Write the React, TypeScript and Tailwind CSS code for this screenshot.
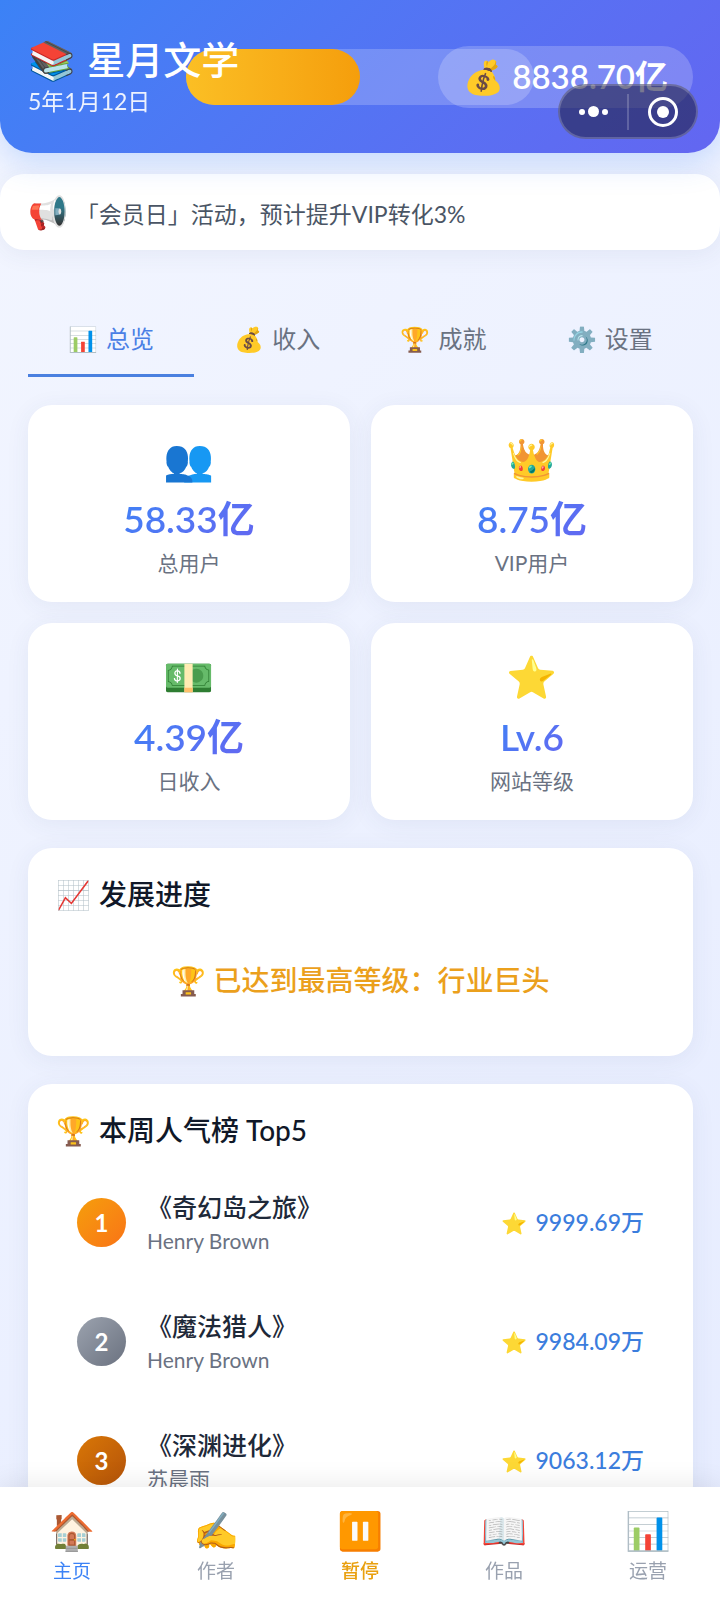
import { useState } from 'react';
import clsx from 'clsx';

interface Stat {
  icon: string;
  value: string;
  label: string;
}

interface Book {
  title: string;
  author: string;
  score: string;
  badge: string;
}

const tabs = [
  { id: 'overview', icon: '📊', label: '总览' },
  { id: 'income', icon: '💰', label: '收入' },
  { id: 'achievements', icon: '🏆', label: '成就' },
  { id: 'settings', icon: '⚙️', label: '设置' },
];

const stats: Stat[] = [
  { icon: '👥', value: '58.33亿', label: '总用户' },
  { icon: '👑', value: '8.75亿', label: 'VIP用户' },
  { icon: '💵', value: '4.39亿', label: '日收入' },
  { icon: '⭐', value: 'Lv.6', label: '网站等级' },
];

const books: Book[] = [
  { title: '《奇幻岛之旅》', author: 'Henry Brown', score: '9999.69万', badge: 'from-[#f59e0b] to-[#f97316]' },
  { title: '《魔法猎人》', author: 'Henry Brown', score: '9984.09万', badge: 'from-[#9ca3af] to-[#6b7280]' },
  { title: '《深渊进化》', author: '苏晨雨', score: '9063.12万', badge: 'from-[#d97706] to-[#b45309]' },
];

const navItems = [
  { id: 'home', icon: '🏠', label: '主页', color: 'text-[#3b82f6]' },
  { id: 'authors', icon: '✍️', label: '作者', color: 'text-gray-400' },
  { id: 'pause', icon: '⏸️', label: '暂停', color: 'text-[#e9a010] font-medium' },
  { id: 'works', icon: '📖', label: '作品', color: 'text-gray-400' },
  { id: 'operate', icon: '📊', label: '运营', color: 'text-gray-400' },
];

const cardClass = 'rounded-3xl bg-white shadow-[0_4px_24px_rgba(60,70,120,0.07)]';

function Capsule() {
  return (
    <div className="absolute right-[22px] bottom-3.5 z-20 flex h-[55px] w-[140px] items-center rounded-full border-2 border-white/20 bg-[#1f2048]/60">
      <button aria-label="更多" className="flex flex-1 items-center justify-center gap-[3px]">
        <span className="size-1.5 rounded-full bg-white" />
        <span className="size-[11px] rounded-full bg-white" />
        <span className="size-1.5 rounded-full bg-white" />
      </button>
      <span className="h-9 w-0.5 bg-white/20" />
      <button aria-label="关闭" className="flex flex-1 items-center justify-center">
        <span className="flex size-[30px] items-center justify-center rounded-full border-3 border-white">
          <span className="size-3 rounded-full bg-white" />
        </span>
      </button>
    </div>
  );
}

function Header() {
  return (
    <header className="relative flex h-[153px] items-center rounded-b-[32px] bg-linear-135 from-[#3b82f6] to-[#6366f1] pr-[27px] pl-7 text-white shadow-[0_8px_32px_rgba(59,130,246,0.25)]">
      <div className="z-10 w-[158px] pt-1 whitespace-nowrap">
        <h1 className="flex gap-3 text-[38px] leading-[44px] font-medium">
          <span>📚</span>
          <span>星月文学</span>
        </h1>
        <p className="text-[23px] leading-10 opacity-90">5年1月12日</p>
      </div>
      <div className="h-14 flex-1 rounded-full bg-white/20">
        <div className="h-full w-1/2 rounded-full bg-linear-to-r from-[#fbbf24] to-[#f59e0b]" />
      </div>
      <div className="-ml-24 flex h-[62px] w-[255px] items-center justify-center rounded-full bg-white/20 text-[33px] font-semibold whitespace-nowrap">
        💰 8838.70亿
      </div>
      <Capsule />
    </header>
  );
}

function StatCard({ stat }: { stat: Stat }) {
  return (
    <div className={clsx(cardClass, 'flex flex-col items-center pt-6 pb-[25px]')}>
      <span className="text-[41px] leading-[60px]">{stat.icon}</span>
      <span className="bg-linear-135 from-[#3b82f6] to-[#6366f1] bg-clip-text text-[37px] leading-[60px] font-semibold text-transparent">
        {stat.value}
      </span>
      <span className="text-[21px] leading-7 text-gray-500">{stat.label}</span>
    </div>
  );
}

function SectionTitle({ icon, children }: { icon: string; children: React.ReactNode }) {
  return (
    <h2 className="flex gap-2 text-[28px] leading-10 font-medium text-gray-900">
      <span>{icon}</span>
      <span>{children}</span>
    </h2>
  );
}

function BookRow({ book, rank }: { book: Book; rank: number }) {
  return (
    <li className="flex h-[99px] items-center px-[21px]">
      <span className={clsx('flex size-[49px] items-center justify-center rounded-full bg-linear-135 text-2xl font-bold text-white', book.badge)}>
        {rank}
      </span>
      <div className="ml-[21px] flex-1">
        <p className="text-[25px] leading-9 font-medium text-gray-800">{book.title}</p>
        <p className="text-[21px] leading-8 text-gray-500">{book.author}</p>
      </div>
      <span className="flex items-center gap-2 text-[23px] font-medium text-[#3b7ddd]">
        <span className="text-[21px]">⭐</span>
        {book.score}
      </span>
    </li>
  );
}

export default function App() {
  const [activeTab, setActiveTab] = useState('overview');

  return (
    <div className="min-h-screen bg-linear-135 from-[#f3f6ff] to-[#e6ecff] font-['Lato','Noto_Sans_CJK_SC','Noto_Color_Emoji',sans-serif]">
      <Header />

      <div className="mt-[21px] flex h-[76px] items-center gap-2 rounded-3xl bg-white px-7 shadow-[0_4px_24px_rgba(60,70,120,0.07)]">
        <span className="text-[32px]">📢</span>
        <p className="pt-1 text-[23px] text-gray-600">「会员日」活动，预计提升VIP转化3%</p>
      </div>

      <main className="pt-[50px] pr-[27px] pl-7">
        <div role="tablist" className="grid grid-cols-4">
          {tabs.map((tab) => (
            <button
              key={tab.id}
              role="tab"
              aria-selected={tab.id === activeTab}
              onClick={() => setActiveTab(tab.id)}
              className={clsx(
                'flex h-[77px] items-center justify-center gap-2 border-b-3 pt-1 text-2xl',
                tab.id === activeTab ? 'border-[#4a80e0] text-[#4a7fe5]' : 'border-transparent text-gray-500'
              )}
            >
              <span>{tab.icon}</span>
              <span>{tab.label}</span>
            </button>
          ))}
        </div>

        <section className="mt-7 grid grid-cols-2 gap-[21px]">
          {stats.map((stat) => (
            <StatCard key={stat.label} stat={stat} />
          ))}
        </section>

        <section className={clsx(cardClass, 'mt-7 h-52 px-7 pt-[26px]')}>
          <SectionTitle icon="📈">发展进度</SectionTitle>
          <p className="mt-[46px] text-center text-[28px] leading-10 font-medium text-[#eba01c]">🏆 已达到最高等级：行业巨头</p>
        </section>

        <section className={clsx(cardClass, 'mt-7 px-7 pt-[26px]')}>
          <SectionTitle icon="🏆">本周人气榜 Top5</SectionTitle>
          <ol className="mt-[23px] flex flex-col gap-5">
            {books.map((book, i) => (
              <BookRow key={book.title} book={book} rank={i + 1} />
            ))}
          </ol>
        </section>
      </main>

      <nav className="fixed inset-x-0 bottom-0 z-30 grid h-[113px] grid-cols-5 bg-white shadow-[0_-4px_24px_rgba(0,0,0,0.08)]">
        {navItems.map((item) => (
          <button key={item.id} className={clsx('flex flex-col items-center justify-start pt-4', item.color)}>
            <span className="text-[37px] leading-[54px]">{item.icon}</span>
            <span className="text-[19px] leading-7">{item.label}</span>
          </button>
        ))}
      </nav>
    </div>
  );
}
